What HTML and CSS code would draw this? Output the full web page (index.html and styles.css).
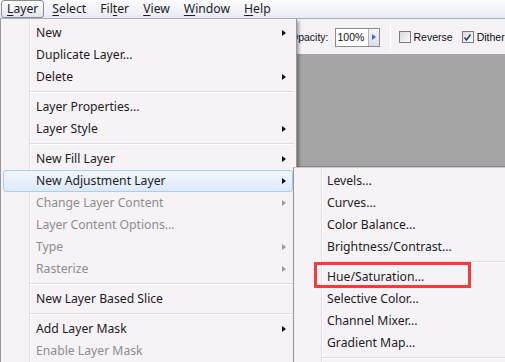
FILE: index.html
```html
<!DOCTYPE html>
<html lang="en">
<head>
    <meta charset="UTF-8">
    <meta name="viewport" content="width=device-width, initial-scale=1.0">
    <title>Layer Menu</title>
    <link rel="stylesheet" href="styles.css">
</head>
<body>
    <div class="menubar">
        <span class="menu-title active"><u>L</u>ayer</span>
        <span class="menu-title"><u>S</u>elect</span>
        <span class="menu-title">Fil<u>t</u>er</span>
        <span class="menu-title"><u>V</u>iew</span>
        <span class="menu-title"><u>W</u>indow</span>
        <span class="menu-title"><u>H</u>elp</span>
    </div>

    <div class="options-bar">
        <span class="opacity-label">Opacity:</span>
        <span class="field">
            <span class="field-value">100%</span>
            <span class="field-btn"></span>
        </span>
        <span class="bar-divider"></span>
        <span class="check"><span class="box"></span>Reverse</span>
        <span class="check"><span class="box checked">
            <svg viewBox="0 0 9 9" width="9" height="9"><polyline points="1.5 4.5 3.5 7 7.5 1.5" fill="none" stroke="#2a3f8a" stroke-width="1.6"></polyline></svg>
        </span>Dither</span>
    </div>

    <div class="canvas"></div>

    <!-- Layer dropdown -->
    <div class="menu main-menu">
        <div class="item sub">New</div>
        <div class="item">Duplicate Layer...</div>
        <div class="item sub">Delete</div>
        <div class="sep"></div>
        <div class="item">Layer Properties...</div>
        <div class="item sub">Layer Style</div>
        <div class="sep"></div>
        <div class="item sub">New Fill Layer</div>
        <div class="item sub hover">New Adjustment Layer</div>
        <div class="item sub disabled">Change Layer Content</div>
        <div class="item disabled">Layer Content Options...</div>
        <div class="item sub disabled">Type</div>
        <div class="item sub disabled">Rasterize</div>
        <div class="sep"></div>
        <div class="item">New Layer Based Slice</div>
        <div class="sep"></div>
        <div class="item sub">Add Layer Mask</div>
        <div class="item disabled">Enable Layer Mask</div>
    </div>

    <!-- New Adjustment Layer submenu -->
    <div class="menu sub-menu">
        <div class="item">Levels...</div>
        <div class="item">Curves...</div>
        <div class="item">Color Balance...</div>
        <div class="item">Brightness/Contrast...</div>
        <div class="sep"></div>
        <div class="item">Hue/Saturation...</div>
        <div class="item">Selective Color...</div>
        <div class="item">Channel Mixer...</div>
        <div class="item">Gradient Map...</div>
        <div class="sep"></div>
    </div>

    <div class="callout"></div>
</body>
</html>
```

FILE: styles.css
```css
* {
    margin: 0;
    padding: 0;
    box-sizing: border-box;
}

body {
    width: 505px;
    height: 362px;
    overflow: hidden;
    position: relative;
    background-color: #a5a5a5;
    font-family: 'Noto Sans', 'Open Sans', sans-serif;
    font-size: 12.2px;
    color: #1c1c24;
}

/* top menu bar */
.menubar {
    height: 18px;
    display: flex;
    align-items: center;
    gap: 2px;
    padding-left: 1px;
    font-size: 12.2px;
    background: linear-gradient(#fbfbfe, #eaeaf5);
}

.menu-title {
    height: 18px;
    line-height: 16px;
    padding: 0 5px;
    border: 1px solid transparent;
    border-radius: 3px;
}

.menu-title u {
    text-decoration-thickness: 1px;
    text-underline-offset: 2px;
}

.menu-title.active {
    border-color: #8a8a96;
    background: linear-gradient(#fdfdfd, #e4e4ee);
}

/* tool options */
.options-bar {
    height: 36px;
    border-top: 1px solid #b0b0c4;
    background-color: #f5f2f5;
    display: flex;
    align-items: center;
    padding-left: 290px;
    padding-top: 1px;
    font-family: 'Liberation Sans', Arial, sans-serif;
    font-size: 10.5px;
    color: #111;
}

.opacity-label {
    margin-right: 6px;
}

.field {
    display: flex;
    height: 19px;
    border: 1px solid #8c8c8c;
    background-color: #fff;
}

.field-value {
    width: 32px;
    padding-left: 2px;
    line-height: 17px;
}

.field-btn {
    width: 11px;
    border-left: 1px solid #b4b4b4;
    background: linear-gradient(#f4f4f8, #dcdce6);
    position: relative;
}

.field-btn::after {
    content: '';
    position: absolute;
    left: 3px;
    top: 5px;
    border-left: 4px solid #3d6ad6;
    border-top: 3px solid transparent;
    border-bottom: 3px solid transparent;
}

.bar-divider {
    width: 1px;
    height: 26px;
    margin: 0 8px 0 10px;
    background-color: #a8a8a8;
    border-right: 1px solid #fff;
    box-sizing: content-box;
}

.check {
    display: flex;
    align-items: center;
    gap: 3px;
    margin-right: 9px;
}

.box {
    width: 12px;
    height: 12px;
    border: 1px solid #7a7a7a;
    background: linear-gradient(135deg, #dcdcdc, #fafafa);
    display: flex;
    align-items: center;
    justify-content: center;
}

.canvas {
    height: 113px;
    background-color: #a5a5a5;
    border-bottom: 1px solid #8a8a8a;
}

/* dropdown menus */
.menu {
    position: absolute;
    background: linear-gradient(to right, transparent 28px, #e2dee2 28px, #e2dee2 29px, #fff 29px, #fff 30px, transparent 30px), #f6f2f6;
    border-left: 1px solid #979797;
    box-shadow: 2px 2px 3px rgba(0, 0, 0, 0.35);
}

.main-menu {
    left: 0;
    top: 19px;
    width: 297px;
    height: 360px;
    padding-top: 3px;
    border-right: 1px solid #979797;
}

.sub-menu {
    left: 293px;
    top: 167px;
    width: 230px;
    height: 210px;
    padding-top: 2px;
    border-top: 1px solid #c8c8c8;
    background: linear-gradient(to right, transparent 27px, #e2dee2 27px, #e2dee2 28px, #fff 28px, #fff 29px, transparent 29px), #f6f2f6;
}

.item {
    position: relative;
    height: 22px;
    line-height: 20px;
    margin: 0 3px 0 2px;
    padding-left: 32px;
    border: 1px solid transparent;
    border-radius: 3px;
    white-space: nowrap;
}

.sub-menu .item {
    padding-left: 30px;
}

.item.sub::after {
    content: '';
    position: absolute;
    right: 6px;
    top: 7px;
    border-left: 4px solid #111;
    border-top: 3.5px solid transparent;
    border-bottom: 3.5px solid transparent;
}

.item.disabled {
    color: #8d8d8d;
}

.item.disabled::after {
    border-left-color: #9a9a9a;
}

.item.hover {
    border-color: #aecbf0;
    background: linear-gradient(#f1f6fd, #dde9f9);
}

.sep {
    height: 1px;
    margin: 3px 2px 3px 29px;
    background-color: #e0dce0;
    border-bottom: 1px solid #fff;
    box-sizing: content-box;
}

.sub-menu .sep {
    margin-left: 28px;
}

/* red highlight around Hue/Saturation */
.callout {
    position: absolute;
    left: 314px;
    top: 262px;
    width: 157px;
    height: 26px;
    border: 3px solid #f53b3b;
}
```
